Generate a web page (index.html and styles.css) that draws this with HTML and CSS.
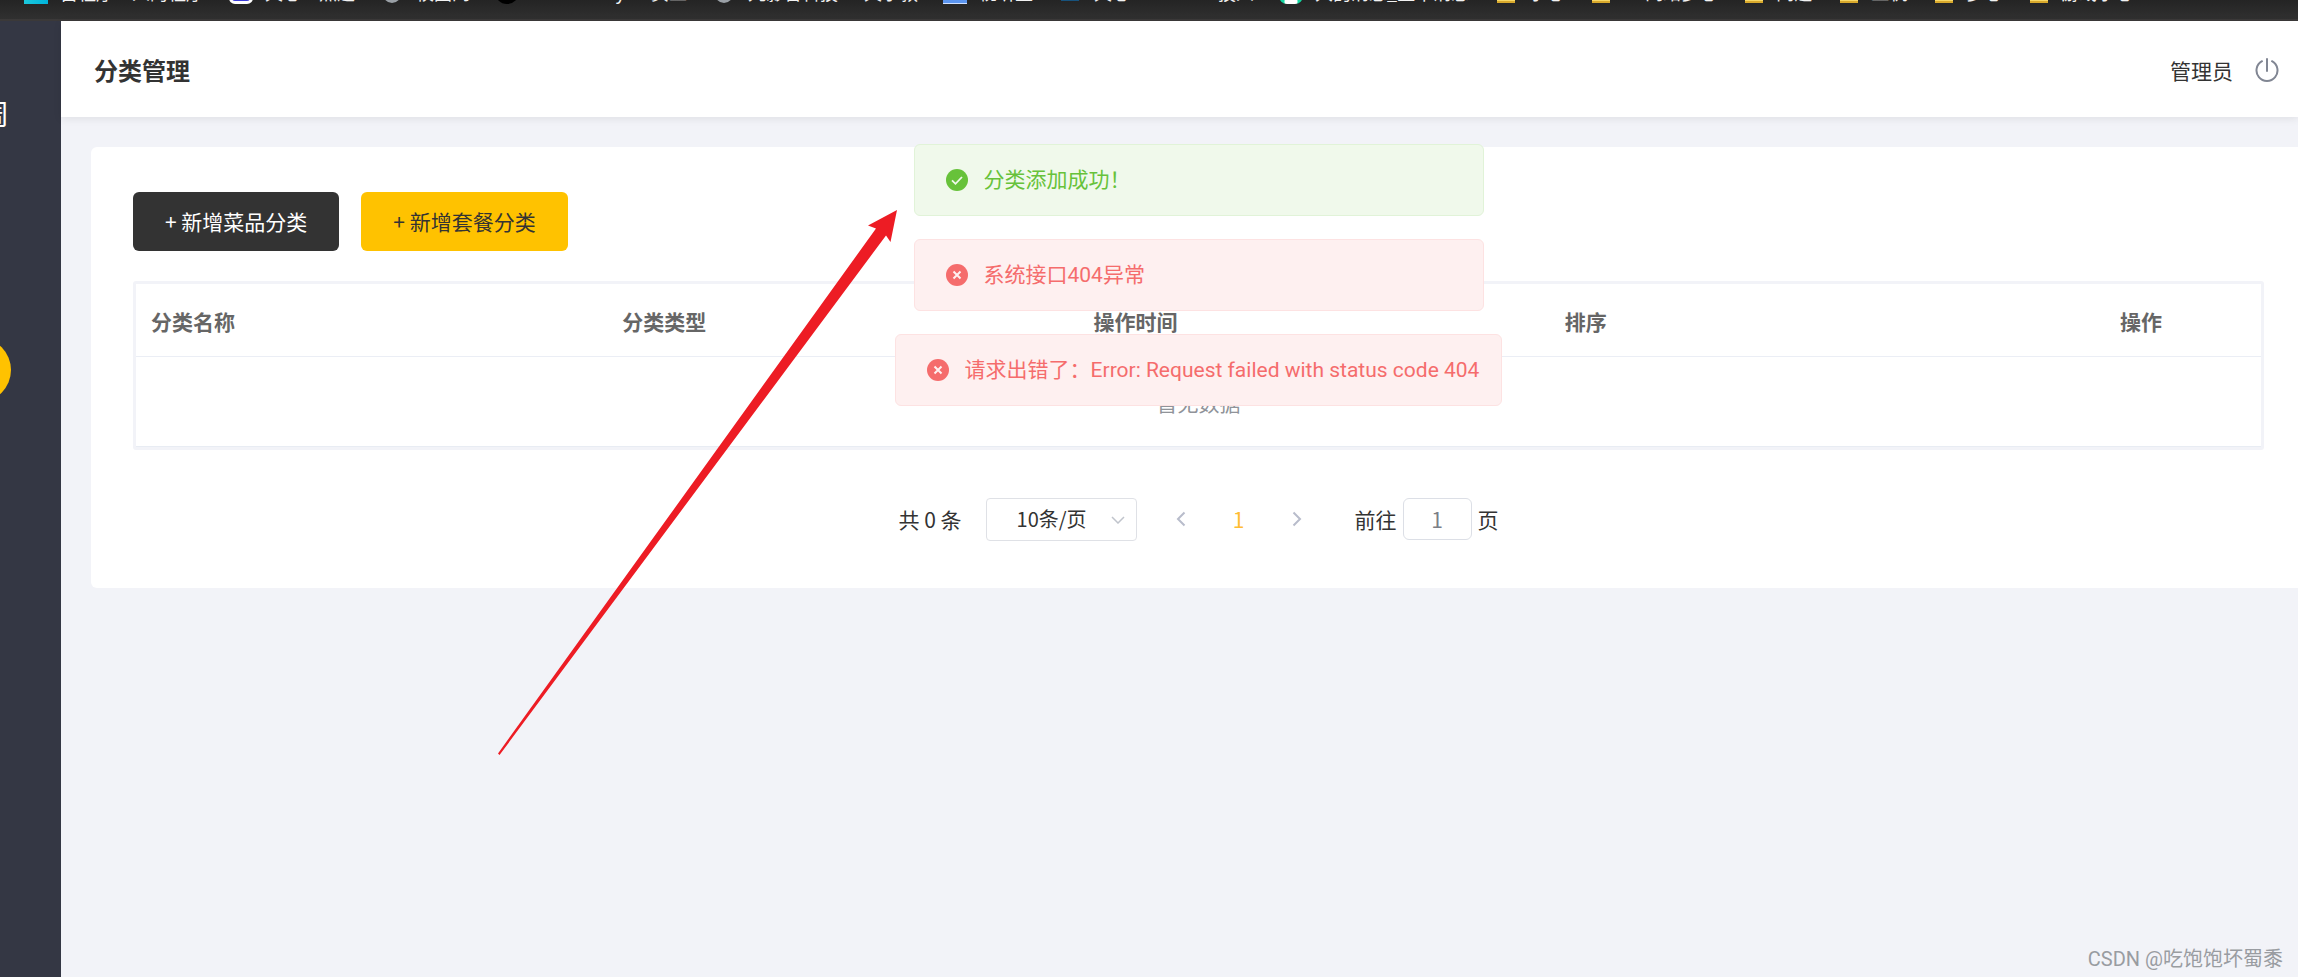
FILE: index.html
```html
<!DOCTYPE html>
<html lang="zh-CN">
<head>
<meta charset="utf-8">
<title>分类管理</title>
<link rel="stylesheet" href="styles.css">
</head>
<body>
<nav class="bookmarks" aria-label="书签栏">
  <a class="bookmark" href="#"><span class="favicon cyan"></span>古程序·人的程序</a>
  <a class="bookmark" href="#"><span class="favicon blue-dots"></span>天心·点题</a>
  <a class="bookmark" href="#"><span class="favicon globe"></span>校图网</a>
  <a class="bookmark" href="#"><span class="favicon black"></span>GitHub any · 页工</a>
  <a class="bookmark" href="#"><span class="favicon globe"></span>九影音科技 · 天小教</a>
  <a class="bookmark" href="#"><span class="favicon sky"></span>视听生</a>
  <a class="bookmark" href="#"><span class="favicon navy"></span>天心 · 一一 · 技人</a>
  <a class="bookmark" href="#"><span class="favicon green"></span>大韵消息_王木消息</a>
  <a class="bookmark" href="#"><span class="favicon folder"></span>小心</a>
  <a class="bookmark" href="#"><span class="favicon folder"></span>一 网络多心</a>
  <a class="bookmark" href="#"><span class="favicon folder"></span>问题</a>
  <a class="bookmark" href="#"><span class="favicon folder"></span>工机</a>
  <a class="bookmark" href="#"><span class="favicon folder"></span>多心</a>
  <a class="bookmark" href="#"><span class="favicon folder"></span>游戏小心</a>
</nav>

<div class="app">
  <aside class="sidebar">
    <div class="brand"><span>周</span></div>
    <div class="sidebar-toggle"></div>
  </aside>

  <div class="main">
    <header class="topbar">
      <h1 class="page-title">分类管理</h1>
      <div class="user">
        <span>管理员</span>
        <button class="icon-button" type="button" aria-label="退出登录">
          <svg class="power" viewBox="0 0 24 24" fill="none" stroke="#818693" stroke-width="2" stroke-linecap="round">
            <path d="M12 1v12M7 3.200a10.500 10.500 0 1 0 10 0"/>
          </svg>
        </button>
      </div>
    </header>

    <main class="content">
      <section class="card">
        <div class="actions">
          <button class="button dark" type="button">+ 新增菜品分类</button>
          <button class="button gold" type="button">+ 新增套餐分类</button>
        </div>

        <div class="table-frame">
          <table class="table">
            <thead>
              <tr><th>分类名称</th><th>分类类型</th><th>操作时间</th><th>排序</th><th class="ops">操作</th></tr>
            </thead>
            <tbody>
              <tr><td class="empty" colspan="5">暂无数据</td></tr>
            </tbody>
          </table>
        </div>

        <div class="pagination">
          <span class="total">共 0 条</span>
          <span class="size-picker">
            <select class="size-select" aria-label="每页条数"><option>10条/页</option></select>
            <svg class="caret" viewBox="0 0 14 8" fill="none" stroke="#c0c4cc" stroke-width="1.500"><path d="M1 1l6 6 6-6"/></svg>
          </span>
          <button class="icon-button pager" type="button" aria-label="上一页"><svg viewBox="0 0 10 16" fill="none" stroke="#b8bccb" stroke-width="2"><path d="M8.500 1.500L2 8l6.500 6.500"/></svg></button>
          <button class="icon-button pager current" type="button">1</button>
          <button class="icon-button pager" type="button" aria-label="下一页"><svg viewBox="0 0 10 16" fill="none" stroke="#b8bccb" stroke-width="2"><path d="M1.500 1.500L8 8l-6.500 6.500"/></svg></button>
          <label class="jump">前往<input class="jump-input" type="text" value="1">页</label>
        </div>

        <div class="toasts" role="status">
          <div class="toast success">
            <svg class="toast-icon" viewBox="0 0 22 22"><circle cx="11" cy="11" r="11" fill="#67c23a"/><path d="M6 11.300l3.500 3.500 6.500-6.800" fill="none" stroke="#f0f9eb" stroke-width="1.800"/></svg>
            <span>分类添加成功！</span>
          </div>
          <div class="toast error">
            <svg class="toast-icon" viewBox="0 0 22 22"><circle cx="11" cy="11" r="11" fill="#f56c6c"/><path d="M7.500 7.500l7 7m0-7l-7 7" fill="none" stroke="#fef0f0" stroke-width="2"/></svg>
            <span>系统接口404异常</span>
          </div>
          <div class="toast error">
            <svg class="toast-icon" viewBox="0 0 22 22"><circle cx="11" cy="11" r="11" fill="#f56c6c"/><path d="M7.500 7.500l7 7m0-7l-7 7" fill="none" stroke="#fef0f0" stroke-width="2"/></svg>
            <span>请求出错了：Error: Request failed with status code 404</span>
          </div>
        </div>
      </section>
    </main>
  </div>
</div>

<svg class="arrow" viewBox="0 0 400 550"><path d="M399 0L370 15.500l8 3L0 543.500l1.500 1.500L388 25.500l4.500 6.500z" fill="#ed1c24"/></svg>
<div class="watermark">CSDN @吃饱饱坏蜀黍</div>
</body>
</html>
```
FILE: styles.css
```css
* { box-sizing: border-box; }

body {
  margin: 0;
  min-height: 100vh;
  display: flex;
  flex-direction: column;
  position: relative;
  overflow: hidden;
  background: #f2f3f8;
  color: #333;
  font-family: "Noto Sans CJK SC", "Noto Sans", sans-serif;
  font-size: 21px;
  line-height: 30px;
}

button, input, select { font: inherit; color: inherit; }

.bookmarks {
  height: 21px;
  flex: none;
  display: flex;
  align-items: flex-end;
  gap: 25px;
  padding: 0 24px 15px;
  overflow: hidden;
  background: linear-gradient(#242424, #303030);
  border-bottom: 2px solid #3b3939;
}
.bookmark {
  flex: none;
  display: flex;
  gap: 12px;
  color: #f2f2f2;
  font-size: 18px;
  line-height: 24px;
  text-decoration: none;
  white-space: nowrap;
}
.favicon { width: 24px; height: 24px; flex: none; }
.cyan { background: linear-gradient(90deg, #1cc8dc, #00b4dc); }
.blue-dots { border: 3px solid #fff; border-radius: 6px; background: #3a3ad8; }
.globe { width: 20px; height: 23px; margin: 0 2px; border-radius: 50%; background: #9aa0a6; }
.black { border-radius: 50%; background: #000; }
.sky { background: #5b95f0; border-bottom: 1px solid #cfe0ff; }
.navy { background: linear-gradient(#17527c, #17527c) center 0 / 18px 21px no-repeat; }
.green { border-radius: 8px; background: radial-gradient(circle at 50% 90%, #fff 6px, #12d6a0 7px); }
.folder { width: 18px; height: 23px; margin: 0 1px 0 3px; background: #f8d866; border-bottom: 2px solid #d8a92c; }

.app { flex: 1; display: flex; }

.sidebar {
  width: 61px;
  flex: none;
  overflow: hidden;
  background: #343744;
}
.brand {
  width: 9px;
  margin-top: 72px;
  display: flex;
  justify-content: flex-end;
  color: #fff;
  font-size: 28px;
  line-height: 40px;
}
.sidebar-toggle {
  width: 64px;
  height: 64px;
  margin: 205px 0 0 -53px;
  border-radius: 50%;
  background: #ffc200;
}

.main { flex: 1; min-width: 0; }

.topbar {
  height: 96px;
  display: flex;
  align-items: center;
  justify-content: space-between;
  padding: 2px 19px 0 33px;
  background: #fff;
  box-shadow: 0 2px 8px rgba(0, 0, 0, 0.08);
}
.page-title { margin: 0; font-size: 24px; font-weight: 700; line-height: 32px; }
.user { display: flex; align-items: center; gap: 22px; }

.icon-button {
  display: flex;
  align-items: center;
  justify-content: center;
  padding: 0;
  border: 0;
  background: none;
}
.power { width: 24px; height: 24px; }

.content { padding: 30px 0 0 30px; }

.card {
  position: relative;
  padding: 45px 34px 46px 42px;
  border-radius: 6px 0 0 6px;
  background: #fff;
}

.actions { display: flex; gap: 22px; }
.button {
  padding: 14px 32px 15px;
  border: 0;
  border-radius: 6px;
}
.dark { background: #333; color: #fff; }
.gold { background: #ffc200; }

.table-frame {
  margin-top: 30px;
  border: 3px solid #f2f3f8;
  border-radius: 3px;
}
.table { width: 100%; border-collapse: collapse; table-layout: fixed; }
.table th {
  height: 72px;
  padding: 2px 15px 0;
  border-bottom: 1px solid #ebeef5;
  color: #666;
  font-weight: 700;
  text-align: left;
}
.table th.ops { width: 240px; text-align: center; }
.empty {
  height: 90px;
  padding: 2px 0 0;
  border-bottom: 1px solid #e8ecf3;
  color: #909399;
  text-align: center;
}

.pagination {
  display: flex;
  align-items: center;
  justify-content: center;
  margin-top: 48px;
  padding-bottom: 1px;
}
.total { margin-right: 24px; }
.size-picker { position: relative; margin-right: 22px; }
.size-select {
  display: block;
  width: 151px;
  height: 43px;
  padding: 0 48px 0 30px;
  border: 1px solid #dfe1e6;
  border-radius: 4px;
  background: #fff;
  appearance: none;
  font-size: 20px;
}
.caret {
  position: absolute;
  right: 12px;
  top: 18px;
  width: 14px;
  height: 8px;
}
.pager { width: 44px; height: 42px; margin-right: 14px; }
.pager svg { width: 10px; height: 16px; }
.current { color: #ffbc33; }
.jump {
  display: flex;
  align-items: center;
  gap: 6px;
  margin-left: 22px;
}
.jump-input {
  width: 69px;
  height: 42px;
  padding: 0;
  border: 1px solid #dcdfe6;
  border-radius: 6px;
  color: #7c7f87;
  text-align: center;
}

.toasts {
  position: absolute;
  top: -3px;
  left: 42px;
  right: 34px;
  display: flex;
  flex-direction: column;
  align-items: center;
  gap: 23px;
  font-family: Roboto, "Noto Sans CJK SC", sans-serif;
}
.toast {
  min-width: 570px;
  min-height: 72px;
  display: flex;
  align-items: center;
  gap: 16px;
  padding: 0 22px 0 31px;
  border: 1px solid;
  border-radius: 6px;
}
.toast-icon { width: 22px; height: 22px; }
.success { background: #f0f9eb; border-color: #e1f3d8; color: #67c23a; }
.error { background: #fef0f0; border-color: #fde2e2; color: #f56c6c; }

.arrow {
  position: absolute;
  left: 498px;
  top: 210px;
  width: 400px;
  height: 550px;
  pointer-events: none;
}

.watermark {
  position: absolute;
  right: 15px;
  bottom: 3px;
  color: #999ca1;
  font-family: Roboto, "Noto Sans CJK SC", sans-serif;
  font-size: 20px;
}
```
